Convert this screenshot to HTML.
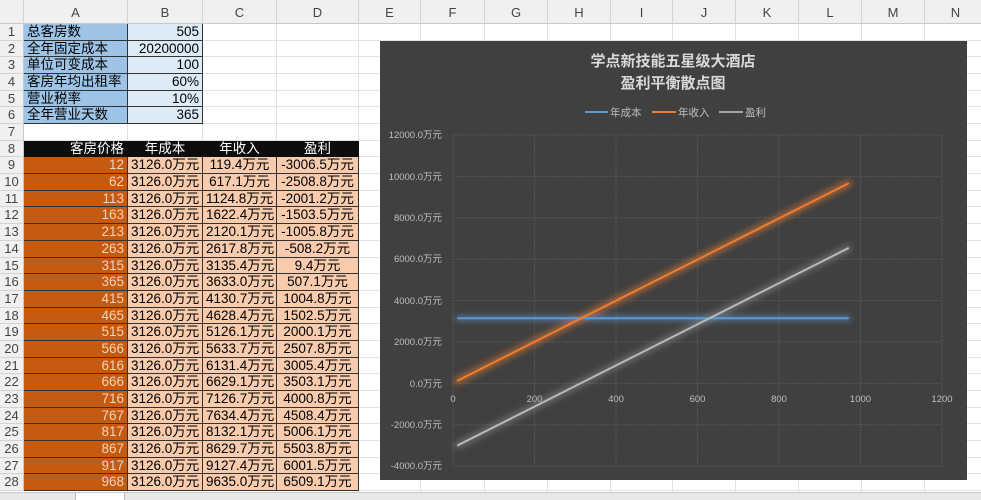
<!DOCTYPE html>
<html><head><meta charset="utf-8"><style>
*{margin:0;padding:0;box-sizing:border-box}
body{width:981px;height:500px;overflow:hidden;background:#fff;font-family:"Liberation Sans","Noto Sans CJK SC",sans-serif;position:relative}
.c{position:absolute;font-size:13.5px;line-height:16.68px;height:16.68px;white-space:nowrap;overflow:hidden}
.hd{position:absolute;top:0;height:24px;line-height:26px;background:#f0f0f0;color:#444;font-size:13px;text-align:center;border-right:1px solid #d4d4d4;border-bottom:1px solid #c8c8c8}
.rh{position:absolute;left:0;width:24px;background:#f0f0f0;color:#444;font-size:13px;text-align:center;border-bottom:1px solid #d4d4d4;border-right:1px solid #c8c8c8}
.gl{position:absolute;background:#e1e1e1}
</style></head><body>
<div id="g"></div>
<svg style="position:absolute;left:380px;top:41px" width="587" height="439" viewBox="380 41 587 439">
<defs><filter id="bl" x="-20%" y="-20%" width="140%" height="140%"><feGaussianBlur stdDeviation="3"/></filter></defs>
<rect x="380" y="41" width="587" height="439" fill="#404040"/>
<g stroke="#555" stroke-width="1" stroke-dasharray="2,1">
<line x1="453" x2="942" y1="135" y2="135"/><line x1="453" x2="942" y1="176.4" y2="176.4"/><line x1="453" x2="942" y1="217.8" y2="217.8"/><line x1="453" x2="942" y1="259.2" y2="259.2"/><line x1="453" x2="942" y1="300.6" y2="300.6"/><line x1="453" x2="942" y1="342" y2="342"/><line x1="453" x2="942" y1="383.4" y2="383.4"/><line x1="453" x2="942" y1="424.8" y2="424.8"/><line x1="453" x2="942" y1="466.2" y2="466.2"/>
<line y1="135" y2="466" x1="453" x2="453"/><line y1="135" y2="466" x1="534.5" x2="534.5"/><line y1="135" y2="466" x1="616" x2="616"/><line y1="135" y2="466" x1="697.5" x2="697.5"/><line y1="135" y2="466" x1="779" x2="779"/><line y1="135" y2="466" x1="860.5" x2="860.5"/><line y1="135" y2="466" x1="942" x2="942"/>
</g>
<g fill="#d9d9d9" font-family="Liberation Sans,Noto Sans CJK SC,sans-serif" font-weight="bold" font-size="15" text-anchor="middle">
<text x="673" y="66">学点新技能五星级大酒店</text><text x="673" y="88">盈利平衡散点图</text></g>
<g font-family="Liberation Sans,Noto Sans CJK SC,sans-serif" font-size="10.5" fill="#bfbfbf">
<line x1="585" x2="608" y1="112" y2="112" stroke="#5b9bd5" stroke-width="2"/><text x="610" y="116">年成本</text>
<line x1="652" x2="676" y1="112" y2="112" stroke="#ed7d31" stroke-width="2"/><text x="678" y="116">年收入</text>
<line x1="719" x2="743" y1="112" y2="112" stroke="#a5a5a5" stroke-width="2"/><text x="745" y="116">盈利</text>
</g>
<g font-family="Liberation Sans,Noto Sans CJK SC,sans-serif" font-size="9.5" fill="#bfbfbf" text-anchor="end">
<text x="442" y="138">12000.0万元</text><text x="442" y="180">10000.0万元</text><text x="442" y="221">8000.0万元</text><text x="442" y="262">6000.0万元</text><text x="442" y="304">4000.0万元</text><text x="442" y="345">2000.0万元</text><text x="442" y="387">0.0万元</text><text x="442" y="428">-2000.0万元</text><text x="442" y="469">-4000.0万元</text>
</g>
<g font-family="Liberation Sans,sans-serif" font-size="9.5" fill="#bfbfbf" text-anchor="middle">
<text x="453" y="402">0</text><text x="534.5" y="402">200</text><text x="616" y="402">400</text><text x="697.5" y="402">600</text><text x="779" y="402">800</text><text x="860.5" y="402">1000</text><text x="942" y="402">1200</text>
</g>
<g stroke-linecap="round" filter="url(#bl)">
<line x1="458" y1="318.3" x2="848" y2="318.3" stroke="#5b9bd5" stroke-opacity=".5" stroke-width="6"/>
<line x1="458" y1="380.5" x2="848" y2="183.6" stroke="#ed7d31" stroke-opacity=".5" stroke-width="8"/>
<line x1="458" y1="445.2" x2="848" y2="248.3" stroke="#a5a5a5" stroke-opacity=".35" stroke-width="8"/>
</g>
<g stroke-linecap="round">
<line x1="458" y1="318.3" x2="848" y2="318.3" stroke="#5b9bd5" stroke-width="2"/>
<line x1="458" y1="380.5" x2="848" y2="183.6" stroke="#ed7d31" stroke-width="2"/>
<line x1="458" y1="445.2" x2="848" y2="248.3" stroke="#b8b8b8" stroke-width="2"/>
</g>
</svg>
<div style="position:absolute;left:0;top:492px;width:981px;height:8px;background:#e8e8e8;border-top:1px solid #c8c8c8"></div>
<div style="position:absolute;left:75px;top:493px;width:50px;height:7px;background:#fff;border-left:1px solid #bbb;border-right:1px solid #bbb"></div>
<script>
const cols=[[24,128,'A'],[128,203,'B'],[203,277,'C'],[277,359,'D'],[359,421,'E'],[421,485,'F'],[485,548,'G'],[548,611,'H'],[611,673,'I'],[673,736,'J'],[736,799,'K'],[799,862,'L'],[862,925,'M'],[925,987,'N']];
const RH=16.68,T=24;let h='';
h+=`<div class="hd" style="left:0;width:24px"></div>`;
cols.forEach(c=>h+=`<div class="hd" style="left:${c[0]}px;width:${c[1]-c[0]}px">${c[2]}</div>`);
cols.forEach(c=>h+=`<div class="gl" style="left:${c[1]-1}px;top:24px;width:1px;height:468px"></div>`);
for(let r=1;r<=28;r++){let y=T+(r-1)*RH;h+=`<div class="rh" style="top:${y}px;height:${RH}px;line-height:${RH}px">${r}</div><div class="gl" style="left:24px;top:${y+RH-1}px;width:960px;height:1px"></div>`;}
const L=['总客房数','全年固定成本','单位可变成本','客房年均出租率','营业税率','全年营业天数'],V=['505','20200000','100','60%','10%','365'];
function cell(x1,x2,r,txt,bg,col,al,br){let y=T+(r-1)*RH;return `<div class="c" style="left:${x1}px;top:${y}px;width:${x2-x1}px;background:${bg};color:${col};text-align:${al};padding:0 3px;border-right:1px solid ${br};border-bottom:1px solid ${br}">${txt}</div>`;}
L.forEach((t,i)=>{h+=cell(24,128,i+1,t,'#9dc3e6','#000','left','#333');h+=cell(128,203,i+1,V[i],'#ddebf7','#000','right','#333');});
h+=cell(24,128,8,'客房价格','#0d0d0d','#fff','right','#0d0d0d');h+=cell(128,203,8,'年成本','#0d0d0d','#fff','center','#0d0d0d');h+=cell(203,277,8,'年收入','#0d0d0d','#fff','center','#0d0d0d');h+=cell(277,359,8,'盈利','#0d0d0d','#fff','center','#0d0d0d');
const P=[12,62,113,163,213,263,315,365,415,465,515,566,616,666,716,767,817,867,917,968];
const R=['119.4','617.1','1124.8','1622.4','2120.1','2617.8','3135.4','3633.0','4130.7','4628.4','5126.1','5633.7','6131.4','6629.1','7126.7','7634.4','8132.1','8629.7','9127.4','9635.0'];
const Q=['-3006.5','-2508.8','-2001.2','-1503.5','-1005.8','-508.2','9.4','507.1','1004.8','1502.5','2000.1','2507.8','3005.4','3503.1','4000.8','4508.4','5006.1','5503.8','6001.5','6509.1'];
P.forEach((p,i)=>{let r=9+i;h+=cell(24,128,r,p,'#c55a11','#f4d3bd','right','#333');h+=cell(128,203,r,'3126.0万元','#f8cbad','#000','center','#333');h+=cell(203,277,r,R[i]+'万元','#f8cbad','#000','center','#333');h+=cell(277,359,r,Q[i]+'万元','#f8cbad','#000','center','#333');});
document.getElementById('g').innerHTML=h;
</script>
</body></html>
